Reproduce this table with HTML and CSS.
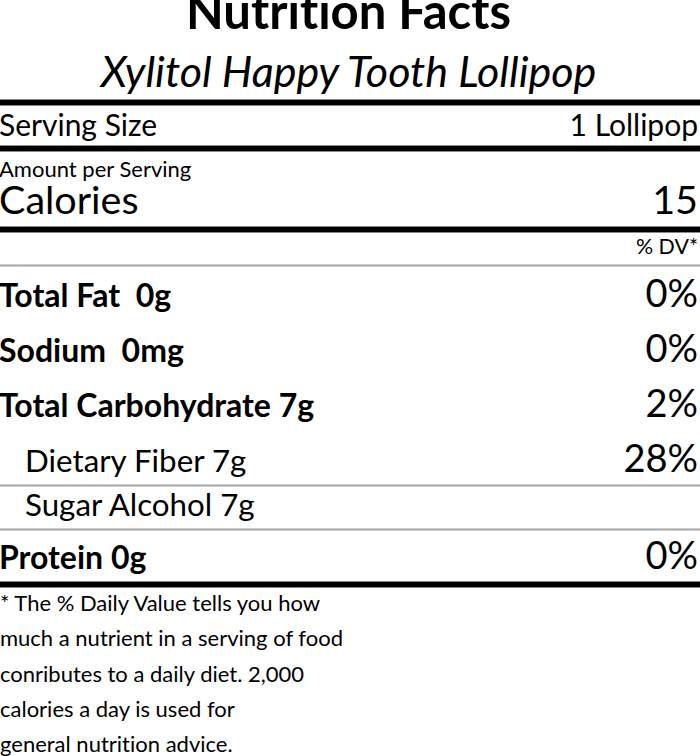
FILE: index.html
```html
<!DOCTYPE html>
<html lang="en">
<head>
<meta charset="utf-8">
<title>Nutrition Facts</title>
<link rel="stylesheet" href="styles.css">
</head>
<body>
<div class="label">
  <h1 class="title">Nutrition Facts</h1>
  <h2 class="subtitle">Xylitol Happy Tooth Lollipop</h2>
  <div class="rule-thick"></div>
  <div class="row serving"><span>Serving Size</span><span>1 Lollipop</span></div>
  <div class="rule-thick"></div>
  <div class="amount">Amount per Serving</div>
  <div class="row calories"><span>Calories</span><span>15</span></div>
  <div class="rule-thick"></div>
  <div class="dv">% DV*</div>
  <div class="rule-thin"></div>
  <div class="row nutrient"><span class="name">Total Fat&nbsp; 0g</span><span class="pct">0%</span></div>
  <div class="row nutrient"><span class="name">Sodium&nbsp; 0mg</span><span class="pct">0%</span></div>
  <div class="row nutrient"><span class="name">Total Carbohydrate 7g</span><span class="pct">2%</span></div>
  <div class="row nutrient sub fiber"><span class="name">Dietary Fiber 7g</span><span class="pct">28%</span></div>
  <div class="rule-thin"></div>
  <div class="row nutrient sub sugar"><span class="name">Sugar Alcohol 7g</span></div>
  <div class="rule-thin"></div>
  <div class="row nutrient protein"><span class="name">Protein 0g</span><span class="pct">0%</span></div>
  <div class="rule-thick"></div>
  <p class="footnote">* The % Daily Value tells you how<br>much a nutrient in a serving of food<br>conributes to a daily diet. 2,000<br>calories a day is used for<br>general nutrition advice.</p>
</div>
</body>
</html>
```

FILE: styles.css
```css
html, body {
  margin: 0;
  padding: 0;
  background: #fff;
}
body {
  width: 700px;
  height: 756px;
  overflow: hidden;
  font-family: Lato, "Open Sans", sans-serif;
  font-variant-ligatures: none;
  color: #000;
}
.label {
  margin-left: -1px;
  padding-right: 2px;
}
.title {
  margin: -14px 0 0 0;
  font-size: 49px;
  line-height: 49px;
  font-weight: 700;
  text-align: center;
}
.subtitle {
  margin: 14px 0 0 0;
  font-size: 43px;
  line-height: 43px;
  font-weight: 400;
  font-style: italic;
  text-align: center;
}
.rule-thick {
  height: 5px;
  background: #000;
  border-top: 1px solid #888;
  border-bottom: 1px solid #888;
  margin-right: -2px;
}
.subtitle + .rule-thick {
  margin-top: 7px;
}
.rule-thin {
  height: 1px;
  background: #a8a8a8;
  border-top: 1px solid #d0d0d0;
  border-bottom: 1px solid #d0d0d0;
  margin-right: -2px;
}
.row {
  display: flex;
  justify-content: space-between;
  align-items: baseline;
  box-sizing: border-box;
}
.row > span {
  line-height: 1;
}
.serving {
  height: 39px;
  padding-top: 3px;
  font-size: 30px;
}
.amount {
  font-size: 22px;
  line-height: 33px;
  height: 33px;
}
.calories {
  height: 41px;
  font-size: 39.5px;
}
.calories > span {
  line-height: 27px;
}
.dv {
  font-size: 21.4px;
  line-height: 27px;
  height: 27px;
  text-align: right;
  margin-bottom: 4px;
}
.nutrient {
  height: 55px;
  padding-top: 6px;
}
.nutrient .name {
  font-size: 32px;
  font-weight: 700;
}
.nutrient .pct {
  font-size: 38px;
}
.sub .name {
  font-weight: 400;
  font-size: 31.3px;
  padding-left: 26px;
}
.fiber {
  height: 52px;
}
.sugar {
  height: 41px;
  padding-top: 2px;
}
.protein {
  height: 50px;
  padding-top: 4px;
}
.footnote {
  margin: -3px 0 0 1px;
  font-size: 22px;
  line-height: 35.25px;
}
```
